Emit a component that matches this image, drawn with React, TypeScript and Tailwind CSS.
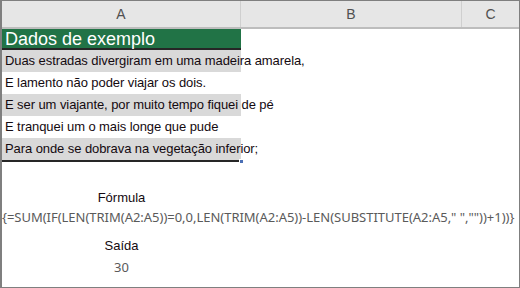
const rows = [
  { text: "Duas estradas divergiram em uma madeira amarela,", shaded: true },
  { text: "E lamento não poder viajar os dois.", shaded: false },
  { text: "E ser um viajante, por muito tempo fiquei de pé", shaded: true },
  { text: "E tranquei um o mais longe que pude", shaded: false },
  { text: "Para onde se dobrava na vegetação inferior;", shaded: true },
];

const formula = '{=SUM(IF(LEN(TRIM(A2:A5))=0,0,LEN(TRIM(A2:A5))-LEN(SUBSTITUTE(A2:A5," ",""))+1))}';

export default function App() {
  return (
    <div className="w-[520px] h-[288px] overflow-hidden bg-white border border-l-2 border-[#7f7f7f] font-['Liberation_Sans',Arial,sans-serif]">
      {/* column headers */}
      <div className="flex h-[28px] bg-[#e6e6e6] border-b-2 border-[#bdbdbd] text-[14px] text-[#505050]">
        <div className="w-[239px] flex items-center justify-center border-r border-[#cfcfcf]">A</div>
        <div className="w-[221px] flex items-center justify-center border-r border-[#cfcfcf]">B</div>
        <div className="flex-1 flex items-center justify-center">C</div>
      </div>

      {/* sample data */}
      <div className="w-[239px] h-[21px] bg-[#217346] border-b-2 border-[#262626] pl-[3px] text-white text-[18px] leading-[21px] whitespace-nowrap">
        Dados de exemplo
      </div>
      <div className="relative w-[239px] border-b-2 border-[#262626]">
        {rows.map((r) => (
          <div
            key={r.text}
            className={`h-[22px] pl-[3px] text-[13px] leading-[22px] text-[#140a10] whitespace-nowrap tracking-[-0.08px] ${r.shaded ? "bg-[#d9d9d9]" : "bg-white"}`}
          >
            {r.text}
          </div>
        ))}
        <div className="absolute right-[-3px] bottom-[-4px] w-[5px] h-[5px] bg-[#4a6fb5] border border-white" />
      </div>

      {/* formula */}
      <div className="mt-[28px] flex flex-col">
        <div className="w-[239px] text-center text-[13px] leading-[16px] text-[#140a10]">Fórmula</div>
        <div className="mt-[3px] text-[13px] leading-[16px] text-[#5a5a5a] whitespace-nowrap tracking-[-0.02px] font-['Noto_Sans',sans-serif]">
          {formula}
        </div>
        <div className="mt-[13px] w-[239px] text-center text-[13px] leading-[16px] text-[#140a10]">Saída</div>
        <div className="mt-[5px] w-[239px] text-center text-[13px] leading-[16px] text-[#5a5a5a] font-['Noto_Sans',sans-serif]">30</div>
      </div>
    </div>
  );
}
